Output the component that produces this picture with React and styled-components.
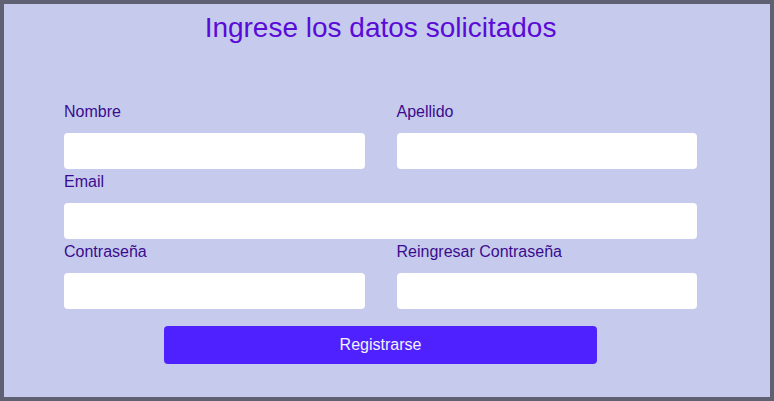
import React from 'react';
import styled, { createGlobalStyle } from 'styled-components';

const GlobalStyle = createGlobalStyle`
  html, body {
    margin: 0;
    padding: 0;
  }
  body {
    font-family: "Liberation Sans", Arial, sans-serif;
  }
  * {
    box-sizing: border-box;
  }
`;

const Frame = styled.div`
  height: 100vh;
  min-height: 401px;
  border: 4px solid #5f6173;
  background-color: #c6cbed;
  padding: 8px 0 0 60px;
`;

const Column = styled.div`
  width: 633px;
`;

const Title = styled.h1`
  margin: 0 0 59px;
  font-size: 28px;
  font-weight: normal;
  line-height: 32px;
  text-align: center;
  color: #5a0bd8;
`;

const Form = styled.form`
  display: flex;
  flex-direction: column;
`;

const Row = styled.div`
  display: grid;
  grid-template-columns: ${props => (props.single ? '1fr' : '1fr 1fr')};
  column-gap: 32px;
`;

const Field = styled.div`
  display: flex;
  flex-direction: column;
  margin-bottom: 4px;
`;

const Label = styled.label`
  font-size: 16px;
  line-height: 18px;
  margin-bottom: 12px;
  color: #3b0b8e;
`;

const Input = styled.input`
  height: 36px;
  border: none;
  border-radius: 4px;
  background: #ffffff;
  padding: 0 10px;
  font-family: inherit;
  font-size: 16px;
  outline: none;
`;

const Button = styled.button`
  margin: 13px 100px 0;
  height: 38px;
  border: none;
  border-radius: 4px;
  background-color: #5021ff;
  color: #f4f2ff;
  font-family: inherit;
  font-size: 16px;
  cursor: pointer;
`;

const rows = [
  [{ id: 'nombre', label: 'Nombre' }, { id: 'apellido', label: 'Apellido' }],
  [{ id: 'email', label: 'Email', type: 'email' }],
  [
    { id: 'password', label: 'Contraseña', type: 'password' },
    { id: 'password2', label: 'Reingresar Contraseña', type: 'password' },
  ],
];

export default function App() {
  return (
    <>
      <GlobalStyle />
      <Frame>
        <Column>
          <Title>Ingrese los datos solicitados</Title>
          <Form onSubmit={e => e.preventDefault()}>
            {rows.map((fields, i) => (
              <Row key={i} single={fields.length === 1}>
                {fields.map(f => (
                  <Field key={f.id}>
                    <Label htmlFor={f.id}>{f.label}</Label>
                    <Input id={f.id} type={f.type || 'text'} />
                  </Field>
                ))}
              </Row>
            ))}
            <Button type="submit">Registrarse</Button>
          </Form>
        </Column>
      </Frame>
    </>
  );
}
